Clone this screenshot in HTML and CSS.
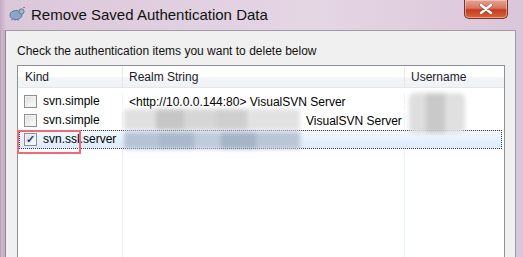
FILE: index.html
```html
<!DOCTYPE html>
<html lang="en">
    <head>
        <meta charset="UTF-8" />
        <title>Remove Saved Authentication Data</title>
        <link rel="stylesheet" href="styles.css">
    </head>
    <body>
        <div class="window">
            <div class="titlebar">
                <svg class="app-icon" width="16" height="14" viewBox="0 0 16 14">
                    <ellipse cx="7" cy="8" rx="6" ry="4.5" fill="#8ea6c4" stroke="#5f7896" stroke-width="1" />
                    <circle cx="12.5" cy="4.5" r="2.6" fill="#9fb5d0" stroke="#5f7896" stroke-width="1" />
                    <path d="M3 12 L3 13.5 M6 12.3 L6 13.5 M9 12.3 L9 13.5" stroke="#5f7896" stroke-width="1.2" />
                    <path d="M14.5 1 L15.5 0" stroke="#333" stroke-width="1" />
                </svg>
                <span class="title">Remove Saved Authentication Data</span>
                <div class="close-button">
                    <svg width="14" height="10" viewBox="0 0 14 10">
                        <path d="M2 1 L12 9 M12 1 L2 9" stroke="#6b3a3a" stroke-width="3.6" stroke-linecap="round" stroke-opacity="0.5" />
                        <path d="M2 1 L12 9 M12 1 L2 9" stroke="#fff" stroke-width="2.4" stroke-linecap="round" />
                    </svg>
                </div>
            </div>
            <div class="frame">
                <div class="panel">
                    <p class="prompt">Check the authentication items you want to delete below</p>
                    <div class="list">
                        <div class="list-header">
                            <div class="col col-kind">Kind</div>
                            <div class="col col-realm">Realm String</div>
                            <div class="col col-user">Username</div>
                        </div>
                        <div class="list-body">
                            <div class="row">
                                <div class="col col-kind"><span class="check"></span>svn.simple</div>
                                <div class="col col-realm">&lt;http://10.0.0.144:80&gt; VisualSVN Server</div>
                                <div class="col col-user"></div>
                            </div>
                            <div class="row">
                                <div class="col col-kind"><span class="check"></span>svn.simple</div>
                                <div class="col col-realm"><span class="realm-tail">VisualSVN Server</span></div>
                                <div class="col col-user"></div>
                            </div>
                            <div class="row selected">
                                <div class="col col-kind"><span class="check checked">&#10003;</span>svn.ssl.server</div>
                                <div class="col col-realm"></div>
                                <div class="col col-user"></div>
                            </div>
                            <div class="filler">
                                <div class="col col-kind"></div>
                                <div class="col col-realm"></div>
                                <div class="col col-user"></div>
                            </div>
                        </div>
                        <div class="mosaic mosaic-realm"></div>
                        <div class="mosaic mosaic-selected"></div>
                        <div class="mosaic mosaic-user"></div>
                        <div class="highlight"></div>
                    </div>
                </div>
            </div>
        </div>
    </body>
</html>
```

FILE: styles.css
```css
* {
    box-sizing: border-box;
    margin: 0;
    padding: 0;
}

body {
    width: 523px;
    height: 257px;
    overflow: hidden;
    background-color: #cdb6cc;
    font-family: "Liberation Sans", Arial, sans-serif;
    color: #000;
}

.window {
    display: flex;
    flex-direction: column;
    height: 100%;
    background: linear-gradient(90deg, #c4a8c3 0, #dbc7da 6px, #e5d6e4 60%, #dac6da 100%);
}

.titlebar {
    height: 30px;
    display: flex;
    align-items: center;
    padding-left: 9px;
    position: relative;
}

.app-icon {
    margin-right: 6px;
    margin-top: -2px;
}

.title {
    font-size: 15px;
    color: #111;
    margin-top: -1px;
}

.close-button {
    position: absolute;
    top: 0;
    left: 464px;
    width: 44px;
    height: 19px;
    border: 1px solid #7a3030;
    border-top: none;
    border-radius: 0 0 5px 5px;
    background: linear-gradient(180deg, #e6a393 0, #d6775f 45%, #c43c1f 55%, #d8643a 100%);
    display: flex;
    justify-content: center;
    align-items: center;
    box-shadow: inset 0 0 0 1px rgba(255, 220, 210, 0.5);
}

.frame {
    flex: 1;
    display: flex;
    padding-left: 5px;
    padding-right: 7px;
    background: linear-gradient(90deg, #b294b0 0, #d3bfd2 2px, #bea3bd 4px, transparent 5px);
}

.panel {
    flex: 1;
    background-color: #f0f0f0;
    border-left: 1px solid #8d8a96;
    border-top: 1px solid #9f9aa6;
    border-right: 1px solid #9f9aa6;
    padding: 0 10px 0 11px;
    display: flex;
    flex-direction: column;
}

.prompt {
    font-size: 12px;
    color: #111;
    padding: 14px 0 0 0;
    height: 34px;
    line-height: 13px;
}

.list {
    flex: 1;
    position: relative;
    background-color: #fff;
    border: 1px solid #8c9099;
    border-bottom: none;
    display: flex;
    flex-direction: column;
    font-size: 12px;
}

.list-header {
    display: flex;
    height: 22px;
    background: linear-gradient(180deg, #ffffff 0, #ffffff 50%, #f4f5f7 51%, #f1f2f4 100%);
    border-bottom: 1px solid #e3e6eb;
}

.list-header .col {
    line-height: 23px;
    border-right: 1px solid #e5e7ea;
    color: #1b1b2a;
}

.col {
    flex-shrink: 0;
    white-space: nowrap;
    overflow: hidden;
}

.col-kind {
    width: 105px;
    padding-left: 7px;
}

.col-realm {
    width: 282px;
    padding-left: 6px;
}

.col-user {
    flex: 1;
    padding-left: 6px;
}

.list-header .col-user {
    border-right: none;
}

.list-body {
    flex: 1;
    display: flex;
    flex-direction: column;
    padding-top: 4px;
}

.row,
.filler {
    display: flex;
}

.row {
    height: 19px;
    line-height: 19px;
    margin: 0 1px;
    border: 1px solid transparent;
}

.row .col-kind {
    width: 103px;
    padding-left: 4px;
    display: flex;
    align-items: center;
    border-right: 1px solid #eef4fb;
}

.row .col-realm {
    border-right: 1px solid #eef4fb;
}

.filler {
    flex: 1;
    margin: 0 2px;
}

.filler .col-kind {
    width: 103px;
    border-right: 1px solid #e8f1fb;
}

.filler .col-realm {
    border-right: 1px solid #e8f1fb;
}

.check {
    width: 13px;
    height: 13px;
    border: 1px solid #8f8f8f;
    background: linear-gradient(135deg, #dcdcdc 0, #f4f4f4 70%, #ffffff 100%);
    box-shadow: inset 0 0 0 1px #f2f2f2;
    margin-right: 6px;
    font-size: 11px;
    line-height: 11px;
    text-align: center;
    color: #2b3e8a;
    font-weight: bold;
}

.realm-tail {
    padding-left: 177px;
}

.row.selected {
    border: 1px dotted #3a3a4a;
    background: linear-gradient(180deg, #f1f7fe 0, #dcebfc 100%);
    margin: 0 2px 0 1px;
}

.row.selected .col {
    border-right-color: transparent;
}

.mosaic {
    position: absolute;
    filter: blur(2px);
}

.mosaic-realm {
    left: 106px;
    top: 43px;
    width: 176px;
    height: 21px;
    background:
        linear-gradient(90deg, #e0e0e0 0 18%, #c6c6c6 18% 34%, #d6d6d6 34% 52%, #cfcfcf 52% 70%, #e2e2e2 70% 100%);
    border-radius: 3px;
}

.mosaic-selected {
    left: 106px;
    top: 66px;
    width: 176px;
    height: 17px;
    background:
        linear-gradient(90deg, #b5c3d6 0 20%, #a9b8cc 20% 40%, #c0cbdb 40% 55%, #a6b4c7 55% 75%, #bac6d6 75% 100%);
}

.mosaic-user {
    left: 391px;
    top: 27px;
    width: 56px;
    height: 40px;
    background:
        linear-gradient(90deg, #dedede 0 30%, #c9c9c9 30% 65%, #e0e0e0 65% 100%);
    border-radius: 6px;
}

.highlight {
    position: absolute;
    left: -1px;
    top: 64px;
    width: 64px;
    height: 24px;
    border: 2px solid #ee6a78;
}
```
